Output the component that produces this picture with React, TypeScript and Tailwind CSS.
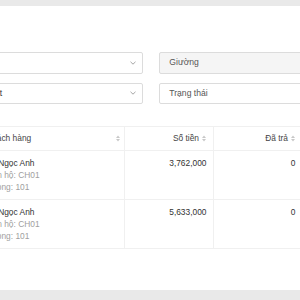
function SortIcon() {
  return (
    <svg width="4" height="7" viewBox="0 0 4 7" className="shrink-0">
      <polygon points="0,3 2,0.5 4,3" fill="#c8c8c8" />
      <polygon points="0,4 2,6.5 4,4" fill="#c8c8c8" />
    </svg>
  );
}

function Chevron() {
  return (
    <svg width="6" height="4" viewBox="0 0 6 4" className="shrink-0">
      <polyline points="0.5,0.8 3,3.2 5.5,0.8" fill="none" stroke="#9a9a9a" strokeWidth="0.9" />
    </svg>
  );
}

const rows = [
  { name: "Lê Ngọc Anh", apt: "CH01", room: "101", amount: "3,762,000", paid: "0" },
  { name: "Lê Ngọc Anh", apt: "CH01", room: "101", amount: "5,633,000", paid: "0" },
];

const cols = "grid grid-cols-[23.5px_142.8px_88.7px_89px_120px]";

export default function App() {
  return (
    <div className="w-[300px] h-[300px] overflow-hidden bg-[#e9e9e9] pt-[6px] font-['Liberation_Sans',Arial,sans-serif]">
      <div className="ml-[-60px] w-[620px] h-[284px] bg-white pt-[46px] pl-[19px]">
        <div className="grid grid-cols-[183.7px_183.7px] gap-x-[16.6px] gap-y-[9px] text-[8.6px] text-[#555]">
          <div className="h-[21.5px] border border-[#dcdcdc] rounded-[2px] pl-[9px] pr-[6px] flex items-center justify-between">
            <span className="text-[#333]">Tòa A</span>
            <Chevron />
          </div>
          <div className="h-[21.5px] border border-[#dcdcdc] rounded-[2px] px-[9px] flex items-center bg-[#f5f5f5]">
            Giường
          </div>
          <div className="h-[21.5px] border border-[#dcdcdc] rounded-[2px] pl-[9px] pr-[6px] flex items-center justify-between">
            <span className="text-[#333]">Tiền mặt</span>
            <Chevron />
          </div>
          <div className="h-[21.5px] border border-[#dcdcdc] rounded-[2px] px-[9px] flex items-center">
            Trạng thái
          </div>
        </div>

        <div className="mt-[22px] w-[600px] text-[8.4px]">
          <div className={`${cols} h-[25px] border-y border-[#f0f0f0] text-[#444]`}>
            <div className="border-r border-[#f0f0f0]" />
            <div className="border-r border-[#f0f0f0] pl-[4px] pr-[4.5px] flex items-center justify-between">
              <span>Khách hàng</span>
              <SortIcon />
            </div>
            <div className="border-r border-[#f0f0f0] pr-[6.5px] flex items-center justify-end gap-[3.5px]">
              <span>Số tiền</span>
              <SortIcon />
            </div>
            <div className="border-r border-[#f0f0f0] pr-[6.5px] flex items-center justify-end gap-[3.5px]">
              <span>Đã trả</span>
              <SortIcon />
            </div>
            <div />
          </div>
          {rows.map((r, i) => (
            <div key={i} className={`${cols} h-[49px] border-b border-[#f0f0f0] leading-[12.4px]`}>
              <div className="border-r border-[#f0f0f0]" />
              <div className="border-r border-[#f0f0f0] pl-[4px] pt-[5.6px]">
                <div className="text-[#333]">{r.name}</div>
                <div className="text-[#a0a0a0]">Căn hộ: {r.apt}</div>
                <div className="text-[#a0a0a0]">Phòng: {r.room}</div>
              </div>
              <div className="border-r border-[#f0f0f0] pr-[6.5px] pt-[5.6px] text-right text-[#333]">
                {r.amount}
              </div>
              <div className="border-r border-[#f0f0f0] pr-[6.5px] pt-[5.6px] text-right text-[#333]">
                {r.paid}
              </div>
              <div />
            </div>
          ))}
        </div>
      </div>
    </div>
  );
}
